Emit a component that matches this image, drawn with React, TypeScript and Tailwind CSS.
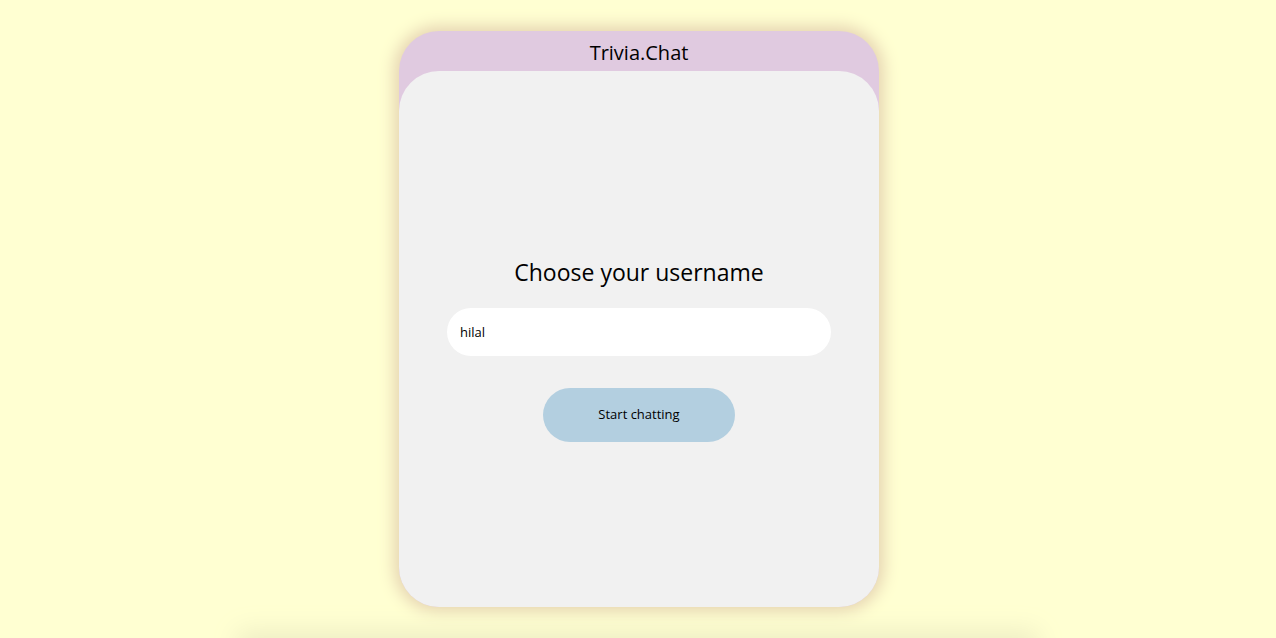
import React from "react";

export default function App() {
  return (
    <div
      className="min-h-screen bg-[#ffffd2] flex flex-col items-center pt-[31px]"
      style={{ fontFamily: '"Open Sans", "Noto Sans", sans-serif' }}
    >
      {/* Chat card */}
      <div className="ml-[2px] w-[480px] h-[576px] rounded-[40px] bg-[#e0cae0] flex flex-col shadow-[0_0_16px_5px_#e6d4b2]">
        <div className="h-[40px] pt-[3px] flex items-center justify-center text-[20px] text-black">
          Trivia.Chat
        </div>
        <div className="flex-1 rounded-[40px] bg-[#f1f1f1] flex flex-col items-center pt-[183px]">
          <h1 className="text-[23px] text-black leading-[36px]">
            Choose your username
          </h1>
          <input
            defaultValue="hilal"
            className="mt-[18px] w-[384px] h-[48px] rounded-full bg-white px-[13px] text-[13px] text-black outline-none"
          />
          <button className="mt-[32px] w-[192px] h-[54px] rounded-full bg-[#b3cfe0] text-[13px] text-black">
            Start chatting
          </button>
        </div>
      </div>

      {/* Next section peeking below */}
      <div className="mt-[34px] w-[780px] h-[200px] bg-[#eeeec4] shadow-[0_0_24px_10px_#eeeec4]" />
    </div>
  );
}
